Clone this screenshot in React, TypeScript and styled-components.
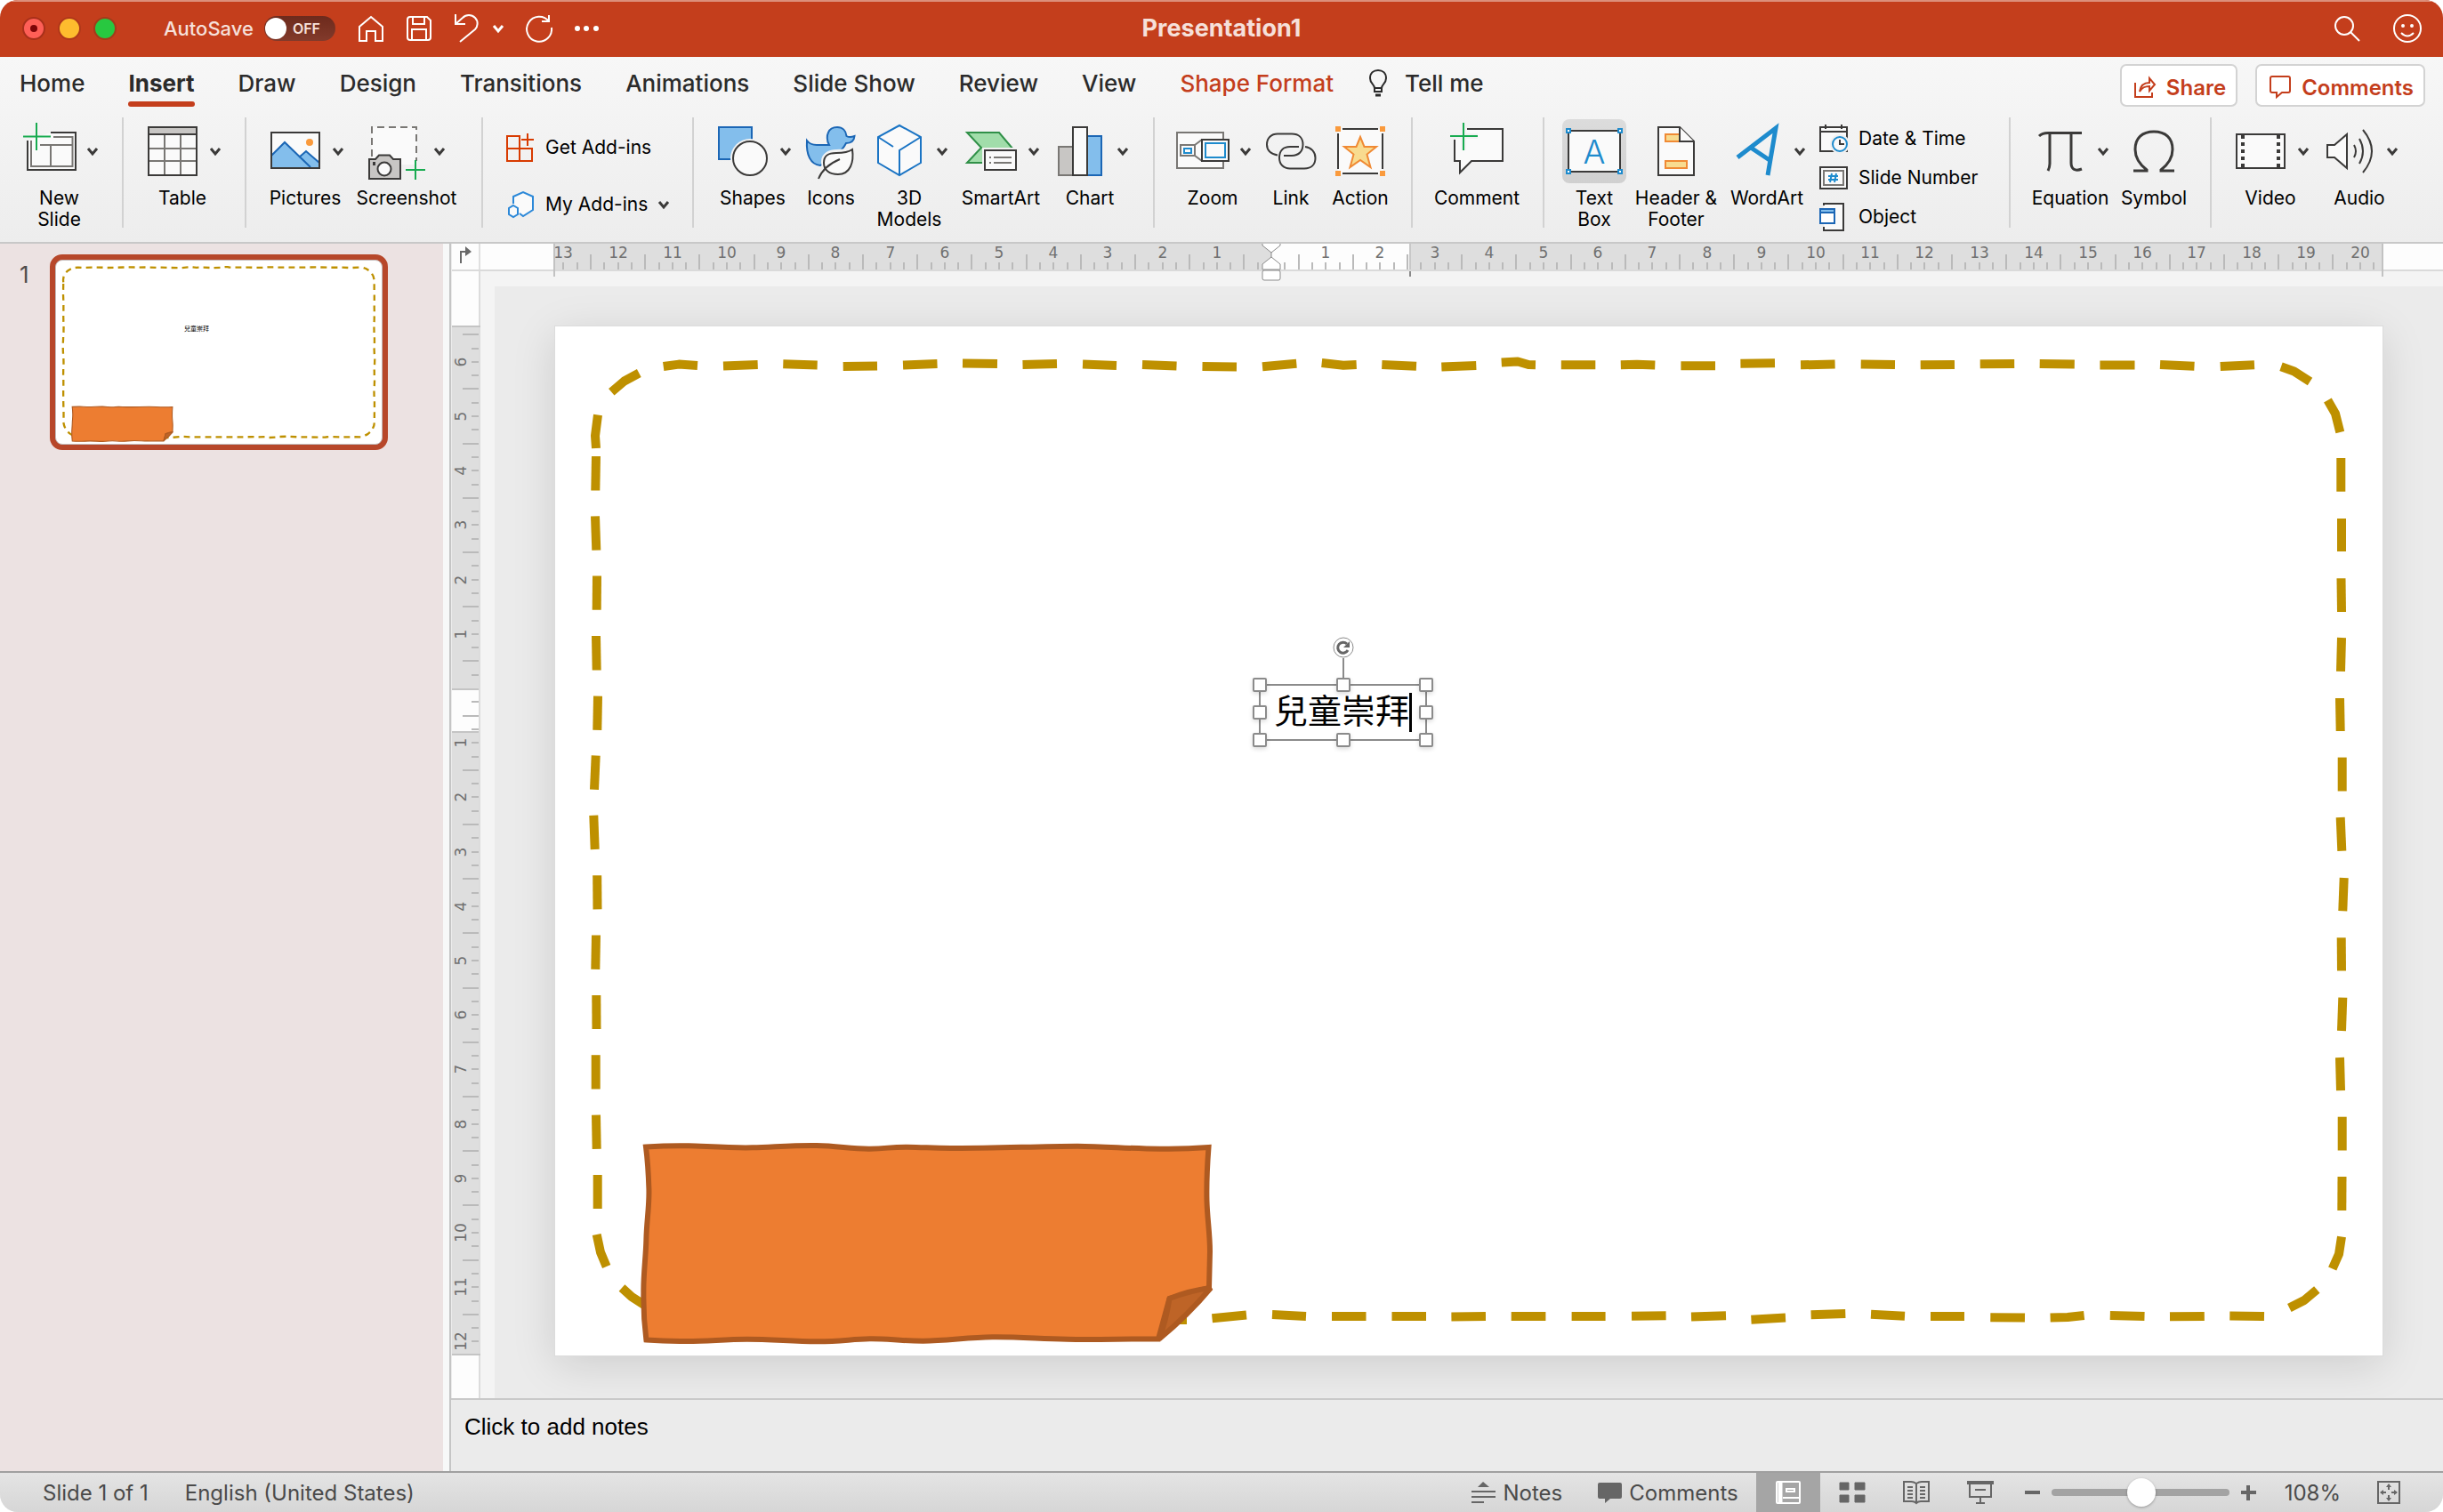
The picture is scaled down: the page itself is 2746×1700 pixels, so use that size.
import React from "react";
import styled, { createGlobalStyle } from "styled-components";

const sans = `Inter, Roboto, "Liberation Sans", sans-serif`;
const brand = "#c43e1c";
const ink = "#3b3a39";
const blue = "#1e8bcd";
const deepBlue = "#1b66b5";
const sky = "#83beec";
const paper = "#fafafa";
const grey = "#797774";
const green = "#18ab50";
const orange = "#f08a34";
const sand = "#f8db8f";
const gold = "#be9000";

const GlobalStyle = createGlobalStyle`
  * { box-sizing: border-box; }
  body { margin: 0; background: #fff; font-family: ${sans}; }
  button { font: inherit; color: inherit; border: 0; padding: 0; background: none; }
  svg { display: block; flex: none; overflow: visible; }
`;

/* ---------- window ---------- */

const Window = styled.div`
  display: flex;
  flex-direction: column;
  height: 100vh;
  min-height: 900px;
  overflow: hidden;
  border-radius: 20px;
  background: #ebebeb;
`;

const TitleBar = styled.header`
  display: grid;
  grid-template-columns: 1fr auto 1fr;
  align-items: center;
  height: 64px;
  flex: none;
  padding: 0 24px;
  background: ${brand};
  box-shadow: inset 0 2px #dc8f7b;
  color: #f6e0da;
`;

const TitleLeft = styled.div`
  display: flex;
  align-items: center;
`;

const TitleRight = styled.div`
  display: flex;
  justify-content: flex-end;
  align-items: center;
  gap: 38px;
`;

const Title = styled.h1`
  margin: 0;
  font-size: 27px;
  line-height: 32px;
  font-weight: 700;
`;

const Lights = styled.div`
  display: flex;
  gap: 14px;
  padding-left: 1px;
`;

const Light = styled.button<{ $color: string; $ring: string }>`
  display: grid;
  place-items: center;
  width: 26px;
  height: 26px;
  border-radius: 50%;
  background: ${(p) => p.$color};
  border: 2px solid ${(p) => p.$ring};
`;

const LightDot = styled.span`
  width: 8px;
  height: 8px;
  border-radius: 50%;
  background: #7d0508;
`;

const SwitchLabel = styled.label`
  display: flex;
  align-items: center;
  gap: 12px;
  margin-left: 53px;
  font-size: 22px;
  font-weight: 500;
`;

const SwitchTrack = styled.span`
  display: flex;
  align-items: center;
  gap: 7px;
  width: 80px;
  height: 28px;
  padding: 0 1px;
  border-radius: 14px;
  background: linear-gradient(#6d2a1c, #823a2b);
  font-size: 16px;
  font-weight: 600;
`;

const SwitchInput = styled.input`
  appearance: none;
  width: 24px;
  height: 24px;
  margin: 0;
  border-radius: 50%;
  background: #fff;
`;

const QuickBar = styled.div`
  display: flex;
  align-items: center;
  margin-left: 26px;
  gap: 26px;
`;

const IconButton = styled.button`
  display: flex;
  align-items: center;
  gap: 16px;
`;

/* ---------- ribbon ---------- */

const Ribbon = styled.div`
  flex: none;
  background: linear-gradient(#f7f7f7, #ededed);
  border-bottom: 2px solid #c8c8c8;
`;

const TabRow = styled.nav`
  display: flex;
  align-items: flex-start;
  height: 68px;
  padding: 8px 20px 0 22px;
`;

const TabList = styled.div`
  display: flex;
  gap: 49px;
  padding-top: 2px;
`;

const Tab = styled.button<{ $active?: boolean; $accent?: boolean }>`
  font-size: 26px;
  line-height: 40px;
  font-weight: ${(p) => (p.$active ? 700 : 500)};
  color: ${(p) => (p.$accent ? brand : "#2b2b2b")};
  white-space: nowrap;
`;

const TabItem = styled.div`
  display: flex;
  flex-direction: column;
`;

const TabMark = styled.span`
  height: 6px;
  border-radius: 3px;
  background: ${brand};
`;

const TellMe = styled(Tab)`
  display: flex;
  align-items: center;
  gap: 20px;
  margin: 2px 0 0 40px;
`;

const TabActions = styled.div`
  display: flex;
  gap: 20px;
  margin-left: auto;
`;

const Pill = styled.button`
  display: flex;
  align-items: center;
  gap: 12px;
  height: 48px;
  padding: 4px 11px 0 14px;
  border: 2px solid #d3d3d3;
  border-radius: 7px;
  background: #fff;
  color: ${brand};
  font-size: 24px;
  font-weight: 600;
`;

const Tools = styled.div`
  display: flex;
  height: 140px;
`;

const Group = styled.div<{ $left?: number; $right?: number }>`
  display: flex;
  height: 124px;
  padding: 2px ${(p) => p.$right ?? 0}px 0 ${(p) => p.$left ?? 0}px;
  border-right: 2px solid #d2d2d2;
  &:last-child {
    border-right: 0;
  }
`;

const ToolButton = styled.button<{ $w: number }>`
  display: flex;
  flex-direction: column;
  align-items: center;
  width: ${(p) => p.$w}px;
  font-size: 21px;
  line-height: 24px;
  color: #000;
  white-space: pre;
`;

const ToolFace = styled.span<{ $on?: boolean }>`
  display: flex;
  align-items: center;
  gap: 10px;
  height: 72px;
  margin-bottom: 5px;
  border-radius: 8px;
  background: ${(p) => (p.$on ? "linear-gradient(#dcdcdc, #d0d0d0)" : "none")};
`;

const IconSlot = styled.span`
  display: grid;
  place-items: center;
  min-width: 64px;
`;

const AddinList = styled.div`
  display: flex;
  flex-direction: column;
  gap: 24px;
  width: 235px;
  padding: 12px 0 0 26px;
`;

const SmallList = styled.div`
  display: flex;
  flex-direction: column;
  width: 217px;
  padding-left: 4px;
`;

const SmallButton = styled.button`
  display: flex;
  align-items: center;
  gap: 12px;
  height: 40px;
  flex: none;
  font-size: 21px;
  line-height: 24px;
  color: #000;
  white-space: nowrap;
`;

const CompactButton = styled(SmallButton)`
  height: 44px;
`;

/* ---------- workspace ---------- */

const Workspace = styled.div`
  display: flex;
  flex: 1;
  min-height: 0;
`;

const SlidePanel = styled.aside`
  display: flex;
  align-items: flex-start;
  gap: 20px;
  width: 505px;
  flex: none;
  padding: 12px 0 0 22px;
  background: #ece2e2;
  border-right: 7px solid #f7f8f8;
`;

const SlideNumber = styled.span`
  width: 14px;
  font-size: 26px;
  line-height: 46px;
  color: #4f4b4b;
`;

const ThumbFrame = styled.button`
  width: 380px;
  padding: 0;
  border: 6px solid #b7472a;
  border-radius: 14px;
  background: #b7472a;
`;

const ThumbSlide = styled.span`
  position: relative;
  display: block;
  border: 1px solid #c3bcbc;
  border-radius: 8px;
  overflow: hidden;
  background: #fff;
`;

const ThumbText = styled.span`
  position: absolute;
  left: 144px;
  top: 71px;
  font: 7px/10px "Noto Sans CJK TC", sans-serif;
  color: #000;
`;

const Editor = styled.main`
  display: flex;
  flex-direction: column;
  flex: 1;
  min-width: 0;
  border-left: 2px solid #c5c5c5;
  padding-left: 1px;
`;

const RulerTop = styled.div`
  display: flex;
  height: 31px;
  flex: none;
  border-bottom: 2px solid #dadada;
  background: #fdfdfd;
  position: relative;
  z-index: 1;
`;

const RulerCorner = styled.div`
  width: 32px;
  flex: none;
  border-right: 2px solid #e0e0e0;
`;

const RulerRow = styled.div`
  display: flex;
  flex: 1;
  min-height: 0;
`;

const RulerSide = styled.div`
  width: 32px;
  flex: none;
  border-right: 2px solid #dcdcdc;
  background: #fdfdfd;
`;

const Canvas = styled.div`
  flex: 1;
  min-width: 0;
  padding: 45px 68px 48px;
  border: solid #f4f4f4;
  border-width: 17px 0 0 16px;
  background: #ebebeb;
  overflow: hidden;
`;

const Slide = styled.div`
  position: relative;
  aspect-ratio: 2054 / 1157;
  background: #fff;
  box-shadow: 0 0 0 1px #dcdcdc, 0 10px 46px rgba(0, 0, 0, 0.13);
`;

const TextFrame = styled.div`
  position: absolute;
  left: 792px;
  top: 403px;
  display: flex;
  align-items: flex-start;
  height: 62px;
  padding: 9px 16px;
  outline: 2px solid #8b8b8b;
  outline-offset: -1px;
  font: 38px/36px "Noto Sans CJK TC", sans-serif;
  color: #000;
`;

const Caret = styled.span`
  width: 3px;
  height: 44px;
  background: #000;
`;

const Handle = styled.span<{ $x: number; $y: number }>`
  position: absolute;
  left: ${(p) => p.$x}%;
  top: ${(p) => p.$y}%;
  width: 16px;
  height: 16px;
  margin: -8px;
  border: 2px solid #8b8b8b;
  border-radius: 2px;
  background: #fff;
  box-shadow: 0 2px 5px rgba(0, 0, 0, 0.15);
`;

const RotateHandle = styled.span`
  position: absolute;
  left: 50%;
  bottom: 100%;
  margin-left: -12px;
`;

const NotesPane = styled.textarea`
  height: 82px;
  flex: none;
  margin-left: -1px;
  padding: 15px 15px;
  border: 0;
  border-top: 2px solid #c9c9c9;
  background: #ebebeb;
  resize: none;
  font: 26px/30px "Liberation Sans", Arial, sans-serif;
  &::placeholder {
    color: #000;
    opacity: 1;
  }
`;

/* ---------- status bar ---------- */

const StatusBar = styled.footer`
  display: flex;
  align-items: center;
  height: 46px;
  flex: none;
  padding: 0 48px;
  border-top: 2px solid #a0a0a0;
  background: linear-gradient(#e4e4e4, #d6d6d6);
  font-size: 24px;
  color: #4a4a4a;
`;

const StatusText = styled.span`
  margin-right: 41px;
`;

const StatusRight = styled.div`
  display: flex;
  align-items: center;
  align-self: stretch;
  margin-left: auto;
`;

const StatusButton = styled.button<{ $mr: number }>`
  display: flex;
  align-items: center;
  gap: 8px;
  margin-right: ${(p) => p.$mr}px;
`;

const ViewButton = styled.button<{ $on?: boolean }>`
  display: grid;
  place-items: center;
  align-self: stretch;
  width: 72px;
  background: ${(p) => (p.$on ? "#a5a5a5" : "none")};
`;

const ZoomControl = styled.div`
  display: flex;
  align-items: center;
  gap: 13px;
  margin-left: 14px;
`;

const ZoomSlider = styled.input`
  appearance: none;
  width: 200px;
  height: 32px;
  margin: 0;
  background: none;
  &::-webkit-slider-runnable-track {
    height: 8px;
    border-radius: 4px;
    background: #a3a3a3;
  }
  &::-webkit-slider-thumb {
    appearance: none;
    width: 32px;
    height: 32px;
    margin-top: -12px;
    border-radius: 50%;
    background: #fff;
    box-shadow: 0 1px 3px rgba(0, 0, 0, 0.3);
  }
`;

const ZoomValue = styled.span`
  margin: 0 41px 0 32px;
`;

/* ---------- icons ---------- */

type IconProps = { w: number; h?: number; children: React.ReactNode; c?: string; s?: number };

const Icon = ({ w, h = 72, c = ink, s = 2, children }: IconProps) => (
  <svg width={w} height={h} viewBox={`0 0 ${w} ${h}`} fill="none" stroke={c} strokeWidth={s} aria-hidden="true">
    {children}
  </svg>
);

const Chevron = ({ c = ink }: { c?: string }) => (
  <Icon w={12} h={8} c={c} s={3}>
    <path d="M1 1l5 6 5-6" />
  </Icon>
);

const icons = {
  newSlide: (
    <Icon w={60}>
      <path d="M5 24V57H59V15H31" fill={paper} />
      <path d="M9 24V53H55.500V20H34M19 29H55M31 29V53" stroke={grey} />
      <path d="M15 4V35M0 19.500H31" stroke={green} />
    </Icon>
  ),
  table: (
    <Icon w={56}>
      <path d="M1 9H55V63H1z" fill={paper} />
      <path d="M1 9H55V17H1z" fill="#c8c6c4" />
      <path d="M19 18V62M37 18V62M2 33H54M2 47H54" stroke={grey} />
      <path d="M1 9H55V63H1zM1 17H55" />
    </Icon>
  ),
  pictures: (
    <Icon w={56}>
      <path d="M1 15H55V55H1z" fill={paper} />
      <path d="M1 41L16 26L46 55H1z" fill={sky} stroke="none" />
      <path d="M32 43L40 36L55 49V55H45z" fill={sky} stroke="none" />
      <path d="M1 41L16 26L45 54M32 43L40 36L55 49" stroke={deepBlue} />
      <circle cx="44" cy="26" r="4" fill="#fa9a3c" stroke="none" />
      <path d="M1 15H55V55H1z" />
    </Icon>
  ),
  screenshot: (
    <Icon w={64}>
      <path d="M4 9H54V51H4z" fill={paper} stroke="none" />
      <path d="M4 42V9H54V47" stroke={grey} strokeDasharray="8 5" />
      <path d="M1 45H8L12 40.500H24L28 45H36V67H1z" fill="#c8c6c4" />
      <path d="M5 50H8" strokeWidth="4" />
      <circle cx="18" cy="56" r="7.500" fill={paper} />
      <path d="M53 46V68M42 57H64" stroke={green} />
    </Icon>
  ),
  shapes: (
    <Icon w={56}>
      <path d="M1 9H38V45H1z" fill={sky} stroke={deepBlue} />
      <circle cx="36" cy="44" r="22" fill="#f2f2f2" stroke="none" />
      <circle cx="36" cy="44" r="19" fill={paper} />
    </Icon>
  ),
  icons: (
    <Icon w={56}>
      <path
        d="M1 24C4 28 8 29 12 29H26C23 24 23.500 18 25 15C27 10 31 9 35 9C41 9 45 13 45.500 19C49 21 52 20 54.500 19C54 25 50 27 45 27C43 31 38 37 33 41L16 52C5 51 0 40 1 24Z"
        fill={sky}
        stroke={deepBlue}
      />
      <path d="M54 30C57 48 51 65 36 65C24 65 17 58 17 48C17 38 26 34 34 34C41 34 48 33 54 30Z" fill="#f2f2f2" stroke="none" />
      <path d="M52 34C54 48 50 62 36 62C26 62 20 57 20 49C20 40 26 38 34 38C41 38 48 37 52 34Z" fill={paper} />
      <path d="M14 67C18 57 26 50 38 45" />
    </Icon>
  ),
  cube: (
    <Icon w={50} c="#1a74c4">
      <path d="M25 7L49 20V49L25 63L1 49V20z" fill={paper} />
      <path d="M49 20L25 35V63M1 20L18 31" />
    </Icon>
  ),
  smartArt: (
    <Icon w={58}>
      <path d="M2 15H38L54 34L40 49H2L18 32z" fill="#a1ddaa" stroke="#309048" />
      <path d="M19 32H60V60H19z" fill="#f2f2f2" stroke="none" />
      <path d="M22 35H57V57H22z" fill={paper} />
      <path d="M27 43H29M32 43H52M27 49H29M32 49H52" stroke={grey} />
    </Icon>
  ),
  chart: (
    <Icon w={50}>
      <path d="M1 31H17V63H1z" fill="#c8c6c4" stroke={grey} />
      <path d="M33 19H49V63H33z" fill={sky} stroke={deepBlue} />
      <path d="M17 9H33V63H17z" fill={paper} />
    </Icon>
  ),
  zoom: (
    <Icon w={60}>
      <path d="M1 15H53V55H1z" fill={paper} stroke={grey} />
      <path d="M5 29H21V41H5zM21 29L29 23M21 41L29 47" stroke={grey} fill={paper} />
      <path d="M9 33H17V38H9z" stroke={blue} />
      <path d="M29 23H59V47H29z" fill={paper} />
      <path d="M33 27H55V43H33z" stroke={blue} />
    </Icon>
  ),
  link: (
    <Icon w={56}>
      <path d="M13 40.500C5 39 1 35 1 28.500C1 21 6 16.500 13 16.500H29C37 16.500 41.500 21 41.500 28.500C41.500 36 37 41 29 41H20" />
      <path d="M37 31H27C19 31 15 36 15 43.500C15 51 20 55.500 27 55.500H43C51 55.500 55.500 51 55.500 43.500C55.500 37 51 32 44 31" />
    </Icon>
  ),
  action: (
    <Icon w={56}>
      <path d="M3 11H53V61H3z" fill={paper} stroke="none" />
      <path d="M8 11H48M8 61H48M3 16V56M53 16V56" />
      <path d="M0 8H6V14H0zM50 8H56V14H50zM0 58H6V64H0zM50 58H56V64H50z" fill="#fa9a3c" stroke="none" />
      <path d="M28 20L32.500 31H46L35.500 39.500L39.500 54L28 46L16.500 54L20.500 39.500L10 31H23.500z" fill={sand} stroke={orange} />
    </Icon>
  ),
  comment: (
    <Icon w={60}>
      <path d="M19 11H59V47H24L11 60V47H5V23" fill={paper} />
      <path d="M15 4V35M0 19H31" stroke="#f2f2f2" strokeWidth="6" />
      <path d="M15 4V35M0 19H31" stroke={green} />
    </Icon>
  ),
  textBox: (
    <Icon w={72}>
      <path d="M7 13H65V59H7z" fill={paper} />
      {[
        [5, 11],
        [63, 11],
        [5, 57],
        [63, 57],
      ].map(([x, y]) => (
        <rect key={`${x}${y}`} x={x} y={y} width="4" height="4" fill="#fff" stroke={blue} />
      ))}
      <text x="36" y="50" textAnchor="middle" fontFamily={sans} fontSize="37" fontWeight="300" fill={blue} stroke="none">
        A
      </text>
    </Icon>
  ),
  headerFooter: (
    <Icon w={42}>
      <path d="M1 9H25L41 25V63H1z" fill={paper} />
      <path d="M9 17H25V25H9zM9 47H33V55H9z" fill={sand} stroke={orange} />
      <path d="M25 9V25H41" fill={paper} />
    </Icon>
  ),
  wordArt: (
    <Icon w={46} c={blue} s={5}>
      <path d="M1 43L44 10L35 63M16 32L37 46" />
    </Icon>
  ),
  date: (
    <Icon w={32} h={32}>
      <path d="M1 3H31V30H1z" fill={paper} />
      <path d="M1 8H31M7 0V5M25 0V5" />
      <circle cx="23" cy="22" r="11" fill="#f1f1f1" stroke="none" />
      <circle cx="23" cy="22" r="8" fill={paper} stroke={blue} />
      <path d="M23 17V22H28" />
    </Icon>
  ),
  slideNumber: (
    <Icon w={32} h={32}>
      <path d="M1 4H31V28H1z" fill={paper} />
      <path d="M5 8H27V24H5z" stroke={grey} />
      <path d="M14 11L12 21M19 11L17 21M10 14H21M10 18H21" stroke={blue} />
    </Icon>
  ),
  object: (
    <Icon w={32} h={32}>
      <path d="M5 3V1H27V31H5V27" fill={paper} />
      <path d="M1 7H17V23H1z" fill="#fff" stroke={deepBlue} />
      <path d="M1 7H17V11H1z" fill={sky} stroke={deepBlue} />
    </Icon>
  ),
  getAddins: (
    <Icon w={32} h={32} c="#d83b01">
      <path d="M1 3H15V31H1zM1 17H29V31H15" />
      <path d="M24 0V14M17 7H31" />
    </Icon>
  ),
  myAddins: (
    <Icon w={32} h={32} c="#2b88d8">
      <path d="M8 15V7L19 2L30 7V22L19 29L15 26" fill={paper} />
      <path d="M8 17L13 20V27L8 30L3 27V20z" fill={paper} />
    </Icon>
  ),
  equation: (
    <Icon w={48} s={3}>
      <path d="M0 19C3 16 6 15.500 10 15.500H48M12 16V50C12 54 11 56 10 58M36 16V49C36 56 40 59 48 56" />
    </Icon>
  ),
  symbol: (
    <Icon w={46} s={3}>
      <path d="M0 58H15V57C6 50 2 42 2 34C2 21 10 14 23 14C36 14 44 21 44 34C44 42 40 50 31 57V58H46" />
    </Icon>
  ),
  video: (
    <Icon w={56}>
      <path d="M1 17H55V55H1z" fill={paper} />
      <path d="M8 18V55M48 18V55" strokeWidth="4" strokeDasharray="4 4" />
      <path d="M1 17H55V55H1z" />
    </Icon>
  ),
  audio: (
    <Icon w={52}>
      <path d="M1 29H9L23 17V55L9 43H1z" fill={paper} />
      <path d="M31 29Q35 36 31 43M37 22Q45 36 37 50M41 12Q61 36 41 60" />
    </Icon>
  ),
  home: (
    <Icon w={28} h={30} c="#fff">
      <path d="M14 2L27 13V29H19V18H9V29H1V13z" />
    </Icon>
  ),
  save: (
    <Icon w={28} h={28} c="#fff">
      <path d="M1 4Q1 1 4 1H23L27 5V24Q27 27 24 27H4Q1 27 1 24zM7 1V9H20V1M6 27V15H22V27" />
    </Icon>
  ),
  undo: (
    <Icon w={27} h={32} c="#fff">
      <path d="M1 0V11H12M1 11L9 4C13 0 19 0 23 4C27 8 26 14 23 17L6 31" />
    </Icon>
  ),
  redo: (
    <Icon w={28} h={32} c="#fff">
      <path d="M25 1V8H17M25 8A14 14 0 1 0 28 15" />
    </Icon>
  ),
  more: (
    <Icon w={27} h={8} c="none">
      <path d="M0 4a3 3 0 1 0 6 0a3 3 0 1 0-6 0M10 4a3 3 0 1 0 6 0a3 3 0 1 0-6 0M21 4a3 3 0 1 0 6 0a3 3 0 1 0-6 0" fill="#fff" />
    </Icon>
  ),
  search: (
    <Icon w={28} h={28} c="#fff">
      <circle cx="11" cy="11" r="10" />
      <path d="M18 18L28 28" />
    </Icon>
  ),
  smile: (
    <Icon w={32} h={32} c="#fff">
      <circle cx="16" cy="16" r="15" />
      <path d="M9 21Q16 28 23 21" />
      <path d="M9 13a2 2 0 1 0 4 0a2 2 0 1 0-4 0M19 13a2 2 0 1 0 4 0a2 2 0 1 0-4 0" fill="#fff" stroke="none" />
    </Icon>
  ),
  bulb: (
    <Icon w={20} h={32} c="#2b2b2b">
      <path d="M6 25V21C6 17 1 16 1 10C1 4 5 1 10 1C15 1 19 4 19 10C19 16 14 17 14 21V25zM6 21H14" />
      <path d="M7 29H13" strokeWidth="3" />
    </Icon>
  ),
  share: (
    <Icon w={24} h={26} c={brand}>
      <path d="M1 8V24H20V19M6 18C7 11 11 8 17 8V3L23 10L17 17V12C12 12 9 13 6 18z" />
    </Icon>
  ),
  bubble: (
    <Icon w={24} h={26} c={brand}>
      <path d="M1 3Q1 1 3 1H21Q23 1 23 3V17Q23 19 21 19H14L8 24V19H3Q1 19 1 17z" />
    </Icon>
  ),
  corner: (
    <Icon w={30} h={29} c="#6a6a6a">
      <path d="M10 22V9H16" />
      <path d="M15 3L22 9L15 14z" fill="#6a6a6a" stroke="none" />
    </Icon>
  ),
  notes: (
    <Icon w={27} h={26} c="#666">
      <path d="M0 12H27M0 18H27M0 24H14" />
      <path d="M13 1L20 7H7z" fill="#666" stroke="none" />
    </Icon>
  ),
  chat: (
    <Icon w={27} h={26} c="none">
      <path d="M2 2H25Q27 2 27 4V18Q27 20 25 20H14L8 25V20H2Q0 20 0 18V4Q0 2 2 2z" fill="#666" />
    </Icon>
  ),
  normalView: (
    <Icon w={28} h={26} c="#fff">
      <path d="M2 1H26Q27 1 27 2V24Q27 25 26 25H2Q1 25 1 24V2Q1 1 2 1z" />
      <path d="M5 1V25" strokeWidth="5" />
      <path d="M12 9H21V12H12zM8 19H27" />
    </Icon>
  ),
  sorter: (
    <Icon w={30} h={22} c="none">
      <path
        d="M1 0H11V8H1zM18 0H29V8H18zM1 14H11V22H1zM18 14H29V22H18z"
        fill="#666"
        stroke="#666"
        strokeLinejoin="round"
        strokeWidth="1"
      />
    </Icon>
  ),
  reading: (
    <Icon w={30} h={26} c="#666">
      <path d="M15 3Q12 1 9 1H1V23H10Q13 23 15 25Q17 23 20 23H29V1H21Q18 1 15 3V25" />
      <path d="M5 7H11M5 11H11M5 15H11M5 19H11M19 7H25M19 11H25M19 15H25M19 19H25" />
    </Icon>
  ),
  show: (
    <Icon w={30} h={26} c="#666">
      <path d="M0 2H30" strokeWidth="4" />
      <path d="M3 3V18H27V3M9 10H21M15 18V25M10 25H20" />
    </Icon>
  ),
  minus: (
    <Icon w={17} h={17} c="#666" s={4}>
      <path d="M0 8H17" />
    </Icon>
  ),
  plus: (
    <Icon w={17} h={17} c="#666" s={4}>
      <path d="M0 8H17M8 0V17" />
    </Icon>
  ),
  fit: (
    <Icon w={26} h={26} c="#666">
      <path d="M1 1H25V25H1z" />
      <path d="M13 4V10M13 16V22M4 13H10M16 13H22" />
      <path d="M10 7L13 3L16 7zM10 19L13 23L16 19zM7 10L3 13L7 16zM19 10L23 13L19 16z" fill="#666" stroke="none" />
    </Icon>
  ),
};

/* ---------- slide artwork ---------- */

const dashes = [
  // left edge
  "672,466.500 669,490 670,504",
  "670,513 669.300,551.500",
  "669,580.400 670.300,618.600",
  "671,647.500 670.700,685.700",
  "670,715 670.700,753.500",
  "672,782.600 671.300,820.900",
  "669.700,849.500 668,887.800",
  "667.300,916.800 668.700,955",
  "671.200,984.200 671.500,1022.400",
  "670,1051.500 669.300,1089.800",
  "670.300,1119 670.500,1157",
  "669.700,1186.200 669.700,1224.500",
  "670,1253.600 670.700,1291.800",
  "671.700,1321 671.700,1359",
  "670.700,1388 675,1408 681.700,1424",
  "699,1448 710,1458 727,1469",
  // top edge
  "687.300,440.700 701.700,428.500 718.300,419.500",
  "745.700,412 763,409.600 784,411",
  "813,411.400 851.700,410",
  "880.300,409.300 918.700,410.400",
  "947.700,412 986,411.500",
  "1015,410.500 1053.500,409",
  "1082,408.500 1121,409",
  "1149.500,410 1188,409",
  "1217,409.500 1255,411",
  "1284,410 1322.500,411.500",
  "1351.500,412 1390,412.500",
  "1419,412.200 1457.300,408.700",
  "1485.700,408 1510,410.700 1524.700,410",
  "1553.300,410 1592,411.800",
  "1620.300,412.600 1659.300,411",
  "1687.700,407.500 1706,406.500 1718,410 1726,410.200",
  "1754.800,410.300 1793.300,410.300",
  "1821.800,410.300 1840,409.800 1860.300,410.500",
  "1889.400,411.300 1928,411.300",
  "1956.400,408.800 1995,408.200",
  "2024,410.300 2062.600,409.500",
  "2091.700,409.600 2130,410",
  "2158.700,410.300 2197,410",
  "2225.700,409.200 2264.200,408.900",
  "2292.700,409 2331.800,409.600",
  "2360.400,410.600 2399.500,410.600",
  "2428,409.900 2466.500,411.800",
  "2495.700,412 2534,410.200",
  "2564,412.300 2578.600,417.500 2596.500,429",
  "2616.400,450 2625,465 2630.300,486",
  // right edge
  "2631.300,515 2631.300,552.700",
  "2632,583 2632,620",
  "2631.500,650.300 2632,688",
  "2632,717 2631,754.800",
  "2630,785 2630.700,822",
  "2632.700,851.600 2632.700,889.500",
  "2630.700,919 2632.300,956.800",
  "2634.700,987 2633.300,1024.200",
  "2631.700,1054.300 2632,1091.500",
  "2633.300,1121.700 2632,1159",
  "2630,1189 2631,1226.200",
  "2632.700,1255.700 2632.700,1293.500",
  "2632.500,1323 2632.300,1361",
  "2632,1390.400 2629,1410 2621.700,1426.500",
  "2604.300,1450 2590,1462 2573.300,1470.500",
  // bottom edge
  "2545,1480 2506.300,1479.500",
  "2477.800,1480 2439,1480.300",
  "2410.500,1480 2371.800,1479",
  "2342.600,1479 2324,1481 2304.600,1481.600",
  "2276,1481.600 2237.300,1481.200",
  "2208,1480 2170,1480",
  "2141,1479.700 2103,1477.700",
  "2074.300,1477 2035.600,1478.300",
  "2007,1481.600 1968.400,1483.700",
  "1940,1479.300 1901,1480.400",
  "1872.600,1479.300 1834,1479.800",
  "1804.600,1480 1766.600,1480",
  "1737.400,1480 1698.700,1480",
  "1670,1480 1631.400,1480.400",
  "1603,1480 1564.500,1480",
  "1535.500,1480 1497,1480",
  "1468,1480 1430,1478",
  "1401,1478.500 1362.500,1482.300",
  "1334,1484 1300,1484",
];

const Artwork = ({ dash = 10 }: { dash?: number }) => (
  <svg width="100%" viewBox="624 367 2054 1157" fill="none" aria-hidden="true">
    {dashes.map((points) => (
      <polyline key={points} points={points} stroke={gold} strokeWidth={dash} strokeLinejoin="round" />
    ))}
    <path
      d="M726 1289.500C742 1288.500 758 1288 774 1288.300S822 1291 846 1290.300S894 1287.500 918 1288S958 1292 978 1291.700S1000 1289.500 1020 1289.700S1050 1291.300 1074 1291C1120 1291 1165 1289 1211 1288.700C1245 1289 1275 1292 1307 1291.700Q1333 1292 1358.500 1290C1357 1310 1356 1330 1356.500 1350S1360 1387 1360 1407L1359 1448L1314.500 1460L1302 1505.500C1268 1505 1234 1506.500 1199.500 1505.700S1144 1503 1115.500 1503.300S1064 1507.700 1037.500 1507.700S998 1505 977.600 1505.300S944 1508.500 917.600 1508.300S866 1505.700 839.700 1505.700S792 1508.500 768 1508Q747 1508 726.400 1506.500Q723 1480 723.400 1453.300C723 1433 726 1413 726.400 1393S730 1356 729.400 1336.700S728 1305 726 1289.500Z"
      fill="#ed7d31"
      stroke="#ae5a21"
      strokeWidth="6"
    />
    <path
      d="M1361 1448Q1337 1451 1314.500 1460Q1311 1483 1303 1505.500Q1336 1478 1361 1448Z"
      fill="#be6427"
      stroke="#ae5a21"
      strokeWidth="6"
      strokeLinejoin="bevel"
    />
  </svg>
);

/* ---------- rulers ---------- */

const unit = 61.2;

const RulerText = styled.text`
  font: 17px "DejaVu Sans", sans-serif;
  fill: #707070;
  text-anchor: middle;
`;

const ticksBetween = (from: number, to: number) => {
  const out: number[] = [];
  for (let q = from; q <= to; q++) if (q !== 0) out.push(q);
  return out;
};

const isHalf = (q: number) => Math.abs(q % 4) === 2;

const HorizontalRuler = () => {
  const zero = 889;
  return (
    <svg width="100%" height="29" aria-label="Horizontal ruler">
      <rect x="83" width="2055" height="29" fill="#dedede" />
      <rect x={zero} width="156" height="29" fill="#fdfdfd" />
      {ticksBetween(-52, 81).map((q) => (
        <rect
          key={q}
          x={Math.round(zero + (q * unit) / 4) - 1}
          y={isHalf(q) ? 12 : 21}
          width="2"
          height={isHalf(q) ? 17 : 8}
          fill="#bababa"
        />
      ))}
      {ticksBetween(-13, 20).map((n) => (
        <RulerText key={n} x={Math.round(zero + n * unit)} y="16">
          {Math.abs(n)}
        </RulerText>
      ))}
      <path d="M83 0V37M2138 0V37" stroke="#c2c2c2" strokeWidth="2" />
      <path d="M1045 0V29" stroke="#c8c8c8" strokeWidth="2" />
      <path d="M1045 31V37" stroke="#8a8a8a" strokeWidth="2" />
      <g fill="#fff" stroke="#8a8a8a">
        <path d="M879 0V2L889 10L899 2V0M889 10V15" />
        <path d="M889 15L879 23V29H899V23z" />
        <rect x="879" y="30" width="20" height="11" rx="2" />
      </g>
    </svg>
  );
};

const VerticalRuler = () => {
  const zero = 469;
  return (
    <svg width="30" height="100%" aria-label="Vertical ruler">
      <rect y="62" width="30" height="1157" fill="#dedede" />
      <rect y={zero} width="30" height="49" fill="#fdfdfd" />
      {ticksBetween(-26, 48).map((q) => (
        <rect
          key={q}
          y={Math.round(zero + (q * unit) / 4) - 1}
          x={isHalf(q) ? 12 : 22}
          height="2"
          width={isHalf(q) ? 18 : 8}
          fill="#bababa"
        />
      ))}
      {ticksBetween(-6, 12).map((n) => (
        <RulerText key={n} transform={`translate(16 ${Math.round(zero + n * unit)}) rotate(-90)`}>
          {Math.abs(n)}
        </RulerText>
      ))}
      <path d="M0 62H38M0 1218H38" stroke="#c4c4c4" strokeWidth="2" />
      <path d="M0 470H30M0 518H30" stroke="#c4c4c4" strokeWidth="2" />
    </svg>
  );
};

/* ---------- composition ---------- */

type ToolProps = { icon: React.ReactNode; label: string; w: number; menu?: boolean; on?: boolean };

const Tool = ({ icon, label, w, menu, on }: ToolProps) => (
  <ToolButton $w={w}>
    <ToolFace $on={on}>
      <IconSlot>{icon}</IconSlot>
      {menu && <Chevron />}
    </ToolFace>
    {label}
  </ToolButton>
);

const handles = [0, 50, 100].flatMap((y) => [0, 50, 100].map((x) => [x, y])).filter(([x, y]) => x !== 50 || y !== 50);

const tabs = ["Home", "Insert", "Draw", "Design", "Transitions", "Animations", "Slide Show", "Review", "View", "Shape Format"];

export default function App() {
  return (
    <>
      <GlobalStyle />
      <Window>
        <TitleBar>
          <TitleLeft>
            <Lights>
              <Light $color="#fe5f57" $ring="#a8301a" aria-label="Close">
                <LightDot />
              </Light>
              <Light $color="#febc2e" $ring="#b0381a" aria-label="Minimize" />
              <Light $color="#28c840" $ring="#a23c1a" aria-label="Full screen" />
            </Lights>
            <SwitchLabel>
              AutoSave
              <SwitchTrack>
                <SwitchInput type="checkbox" role="switch" />
                OFF
              </SwitchTrack>
            </SwitchLabel>
            <QuickBar>
              <IconButton aria-label="Home">{icons.home}</IconButton>
              <IconButton aria-label="Save">{icons.save}</IconButton>
              <IconButton aria-label="Undo">
                {icons.undo}
                <Chevron c="#fff" />
              </IconButton>
              <IconButton aria-label="Redo">{icons.redo}</IconButton>
              <IconButton aria-label="More">{icons.more}</IconButton>
            </QuickBar>
          </TitleLeft>
          <Title>Presentation1</Title>
          <TitleRight>
            <IconButton aria-label="Search">{icons.search}</IconButton>
            <IconButton aria-label="Feedback">{icons.smile}</IconButton>
          </TitleRight>
        </TitleBar>

        <Ribbon>
          <TabRow>
            <TabList>
              {tabs.map((name) => (
                <TabItem key={name}>
                  <Tab $active={name === "Insert"} $accent={name === "Shape Format"}>
                    {name}
                  </Tab>
                  {name === "Insert" && <TabMark />}
                </TabItem>
              ))}
            </TabList>
            <TellMe>
              {icons.bulb}
              Tell me
            </TellMe>
            <TabActions>
              <Pill>
                {icons.share}
                Share
              </Pill>
              <Pill>
                {icons.bubble}
                Comments
              </Pill>
            </TabActions>
          </TabRow>
          <Tools>
            <Group $right={4}>
              <Tool icon={icons.newSlide} label={"New\nSlide"} w={133} menu />
            </Group>
            <Group $right={4}>
              <Tool icon={icons.table} label="Table" w={132} menu />
            </Group>
            <Group $left={9} $right={27}>
              <Tool icon={icons.pictures} label="Pictures" w={114} menu />
              <Tool icon={icons.screenshot} label="Screenshot" w={114} menu />
            </Group>
            <Group>
              <AddinList>
                <SmallButton>
                  {icons.getAddins}
                  Get Add-ins
                </SmallButton>
                <SmallButton>
                  {icons.myAddins}
                  My Add-ins
                  <Chevron />
                </SmallButton>
              </AddinList>
            </Group>
            <Group $left={22} $right={30}>
              <Tool icon={icons.shapes} label="Shapes" w={88} menu />
              <Tool icon={icons.icons} label="Icons" w={88} />
              <Tool icon={icons.cube} label={"3D\nModels"} w={88} menu />
              <Tool icon={icons.smartArt} label="SmartArt" w={118} menu />
              <Tool icon={icons.chart} label="Chart" w={82} menu />
            </Group>
            <Group $left={21} $right={23}>
              <Tool icon={icons.zoom} label="Zoom" w={88} menu />
              <Tool icon={icons.link} label="Link" w={88} />
              <Tool icon={icons.action} label="Action" w={68} />
            </Group>
            <Group $right={2}>
              <Tool icon={icons.comment} label="Comment" w={144} />
            </Group>
            <Group $left={11}>
              <Tool icon={icons.textBox} label={"Text\nBox"} w={90} on />
              <Tool icon={icons.headerFooter} label={"Header &\nFooter"} w={94} />
              <Tool icon={icons.wordArt} label="WordArt" w={110} menu />
              <SmallList>
                <CompactButton>
                  {icons.date}
                  Date &amp; Time
                </CompactButton>
                <CompactButton>
                  {icons.slideNumber}
                  Slide Number
                </CompactButton>
                <CompactButton>
                  {icons.object}
                  Object
                </CompactButton>
              </SmallList>
            </Group>
            <Group $left={15} $right={21}>
              <Tool icon={icons.equation} label="Equation" w={104} menu />
              <Tool icon={icons.symbol} label="Symbol" w={84} />
            </Group>
            <Group $left={16}>
              <Tool icon={icons.video} label="Video" w={100} menu />
              <Tool icon={icons.audio} label="Audio" w={100} menu />
            </Group>
          </Tools>
        </Ribbon>

        <Workspace>
          <SlidePanel>
            <SlideNumber>1</SlideNumber>
            <ThumbFrame aria-label="Slide 1">
              <ThumbSlide>
                <Artwork dash={13} />
                <ThumbText>兒童崇拜</ThumbText>
              </ThumbSlide>
            </ThumbFrame>
          </SlidePanel>
          <Editor>
            <RulerTop>
              <RulerCorner>{icons.corner}</RulerCorner>
              <HorizontalRuler />
            </RulerTop>
            <RulerRow>
              <RulerSide>
                <VerticalRuler />
              </RulerSide>
              <Canvas>
                <Slide>
                  <Artwork />
                  <TextFrame>
                    兒童崇拜
                    <Caret />
                    <RotateHandle>
                      <Icon w={24} h={56} c="#8b8b8b">
                        <path d="M12 26V56" />
                        <circle cx="12" cy="14" r="11" fill="#fff" strokeWidth="1" />
                        <path d="M17 17A6 6 0 1 1 16 10" stroke="#666" strokeWidth="3" />
                        <path d="M19 7V14H12z" fill="#666" stroke="none" />
                      </Icon>
                    </RotateHandle>
                    {handles.map(([x, y]) => (
                      <Handle key={`${x}-${y}`} $x={x} $y={y} />
                    ))}
                  </TextFrame>
                </Slide>
              </Canvas>
            </RulerRow>
            <NotesPane aria-label="Notes" placeholder="Click to add notes" />
          </Editor>
        </Workspace>

        <StatusBar>
          <StatusText>Slide 1 of 1</StatusText>
          <StatusText>English (United States)</StatusText>
          <StatusRight>
            <StatusButton $mr={40}>
              {icons.notes}
              Notes
            </StatusButton>
            <StatusButton $mr={20}>
              {icons.chat}
              Comments
            </StatusButton>
            <ViewButton $on aria-label="Normal">
              {icons.normalView}
            </ViewButton>
            <ViewButton aria-label="Slide sorter">{icons.sorter}</ViewButton>
            <ViewButton aria-label="Reading view">{icons.reading}</ViewButton>
            <ViewButton aria-label="Slide show">{icons.show}</ViewButton>
            <ZoomControl>
              <IconButton aria-label="Zoom out">{icons.minus}</IconButton>
              <ZoomSlider type="range" min="0" max="100" defaultValue="51" aria-label="Zoom" />
              <IconButton aria-label="Zoom in">{icons.plus}</IconButton>
            </ZoomControl>
            <ZoomValue>108%</ZoomValue>
            <IconButton aria-label="Fit to window">{icons.fit}</IconButton>
          </StatusRight>
        </StatusBar>
      </Window>
    </>
  );
}
